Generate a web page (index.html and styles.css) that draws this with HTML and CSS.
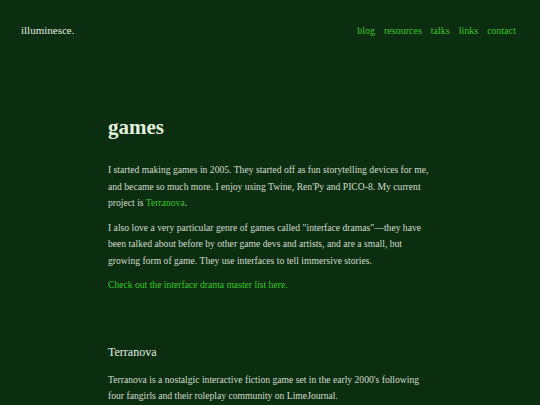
FILE: index.html
```html
<!DOCTYPE html>
<html lang="en">
<head>
<meta charset="utf-8">
<title>games — illuminesce.</title>
<link rel="stylesheet" href="styles.css">
</head>
<body>
<header class="site-header">
  <a class="logo" href="#">illuminesce.</a>
  <nav class="nav">
    <a href="#">blog</a>
    <a href="#">resources</a>
    <a href="#">talks</a>
    <a href="#">links</a>
    <a href="#">contact</a>
  </nav>
</header>
<main class="content">
  <h1 class="title">games</h1>
  <p>I started making games in 2005. They started off as fun storytelling devices for me, and became so much more. I enjoy using Twine, Ren'Py and PICO-8. My current project is <a href="#">Terranova</a>.</p>
  <p>I also love a very particular genre of games called "interface dramas"—they have been talked about before by other game devs and artists, and are a small, but growing form of game. They use interfaces to tell immersive stories.</p>
  <p><a href="#">Check out the interface drama master list here.</a></p>
  <h2 class="subtitle">Terranova</h2>
  <p>Terranova is a nostalgic interactive fiction game set in the early 2000's following four fangirls and their roleplay community on LimeJournal.</p>
</main>
</body>
</html>
```

FILE: styles.css
```css
html, body {
  margin: 0;
  padding: 0;
  background: #0c2e10;
}
body {
  font-family: "Liberation Serif", "DejaVu Serif", serif;
  color: #d2ddce;
  font-size: 9.65px;
  line-height: 16.5px;
}
a {
  color: #38c426;
  text-decoration: none;
}
.site-header {
  display: flex;
  justify-content: space-between;
  align-items: center;
  padding: 21px 24px 0 21px;
  height: 18px;
}
.logo {
  color: #e2ece0;
  font-size: 11px;
}
.nav {
  display: flex;
  gap: 9px;
  font-size: 10px;
  padding-top: 2px;
}
.content {
  width: 324px;
  margin: 0 auto;
  padding-top: 75px;
}
.title {
  margin: 0 0 22px;
  font-size: 21px;
  line-height: 26px;
  font-weight: bold;
  color: #e2f0de;
}
.content p {
  margin: 0 0 8px;
}
.subtitle {
  margin: 50px 0 12px;
  font-size: 12px;
  line-height: 16px;
  font-weight: normal;
  color: #e2ece0;
}
```
